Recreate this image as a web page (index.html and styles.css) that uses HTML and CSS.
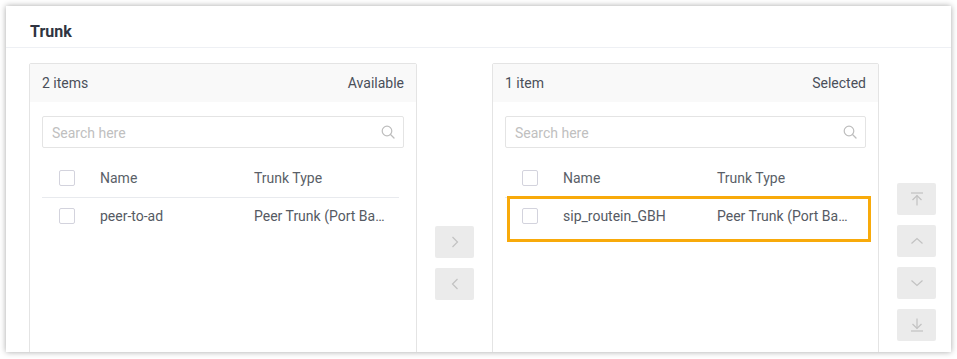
FILE: index.html
```html
<!DOCTYPE html>
<html lang="en">
<head>
    <meta charset="UTF-8">
    <meta name="viewport" content="width=device-width, initial-scale=1.0">
    <title>Trunk</title>
    <link rel="stylesheet" href="styles.css">
</head>
<body>
    <div class="card">
        <div class="card-header">Trunk</div>

        <div class="transfer">
            <div class="panel">
                <div class="panel-head">
                    <span>2 items</span>
                    <span>Available</span>
                </div>
                <div class="panel-body">
                    <div class="search">
                        <span class="placeholder">Search here</span>
                        <svg class="search-icon" width="14" height="14" viewBox="0 0 14 14">
                            <circle cx="6" cy="6" r="4.8" fill="none" stroke="#bdbdbd" stroke-width="1.2"/>
                            <line x1="9.5" y1="9.5" x2="13" y2="13" stroke="#bdbdbd" stroke-width="1.3" stroke-linecap="round"/>
                        </svg>
                    </div>
                    <div class="list">
                        <div class="row row-head">
                            <span class="cell"><span class="checkbox"></span></span>
                            <span class="cell">Name</span>
                            <span class="cell">Trunk Type</span>
                        </div>
                        <div class="row">
                            <span class="cell"><span class="checkbox"></span></span>
                            <span class="cell">peer-to-ad</span>
                            <span class="cell" title="Peer Trunk (Port Based)">Peer Trunk (Port Ba…</span>
                        </div>
                    </div>
                </div>
            </div>

            <div class="ops">
                <button class="op-btn">
                    <svg width="8" height="12" viewBox="0 0 8 12"><polyline points="1.5,1 6.5,6 1.5,11" fill="none" stroke="#c2c2c2" stroke-width="1.2"/></svg>
                </button>
                <button class="op-btn">
                    <svg width="8" height="12" viewBox="0 0 8 12"><polyline points="6.5,1 1.5,6 6.5,11" fill="none" stroke="#c2c2c2" stroke-width="1.2"/></svg>
                </button>
            </div>

            <div class="panel panel-right">
                <div class="panel-head">
                    <span>1 item</span>
                    <span>Selected</span>
                </div>
                <div class="panel-body">
                    <div class="search">
                        <span class="placeholder">Search here</span>
                        <svg class="search-icon" width="14" height="14" viewBox="0 0 14 14">
                            <circle cx="6" cy="6" r="4.8" fill="none" stroke="#bdbdbd" stroke-width="1.2"/>
                            <line x1="9.5" y1="9.5" x2="13" y2="13" stroke="#bdbdbd" stroke-width="1.3" stroke-linecap="round"/>
                        </svg>
                    </div>
                    <div class="list">
                        <div class="row row-head">
                            <span class="cell"><span class="checkbox"></span></span>
                            <span class="cell">Name</span>
                            <span class="cell">Trunk Type</span>
                        </div>
                        <div class="row">
                            <span class="cell"><span class="checkbox"></span></span>
                            <span class="cell">sip_routein_GBH</span>
                            <span class="cell" title="Peer Trunk (Port Based)">Peer Trunk (Port Ba…</span>
                        </div>
                    </div>
                </div>
                <div class="highlight"></div>
            </div>

            <div class="ops ops-sort">
                <button class="op-btn">
                    <svg width="14" height="14" viewBox="0 0 14 14"><line x1="1" y1="1" x2="13" y2="1" stroke="#c2c2c2" stroke-width="1.2"/><line x1="7" y1="3.5" x2="7" y2="13.5" stroke="#c2c2c2" stroke-width="1.2"/><polyline points="2.5,8 7,3.5 11.5,8" fill="none" stroke="#c2c2c2" stroke-width="1.2"/></svg>
                </button>
                <button class="op-btn">
                    <svg width="14" height="8" viewBox="0 0 14 8"><polyline points="1.5,6.5 7,1.5 12.5,6.5" fill="none" stroke="#c2c2c2" stroke-width="1.2"/></svg>
                </button>
                <button class="op-btn">
                    <svg width="14" height="8" viewBox="0 0 14 8"><polyline points="1.5,1.5 7,6.5 12.5,1.5" fill="none" stroke="#c2c2c2" stroke-width="1.2"/></svg>
                </button>
                <button class="op-btn">
                    <svg width="14" height="14" viewBox="0 0 14 14"><line x1="1" y1="13" x2="13" y2="13" stroke="#c2c2c2" stroke-width="1.2"/><line x1="7" y1="0.5" x2="7" y2="10.5" stroke="#c2c2c2" stroke-width="1.2"/><polyline points="2.5,6 7,10.5 11.5,6" fill="none" stroke="#c2c2c2" stroke-width="1.2"/></svg>
                </button>
            </div>
        </div>
    </div>
</body>
</html>
```

FILE: styles.css
```css
body {
    margin: 0;
    padding: 6px;
    background-color: #ffffff;
    font-family: Roboto, "Liberation Sans", Arial, sans-serif;
    font-size: 14px;
    color: #555a63;
}
.card {
    width: 945px;
    height: 346px;
    background-color: #ffffff;
    box-shadow: 0 0 6px rgba(0, 0, 0, 0.35);
    overflow: hidden;
}
.card-header {
    height: 42px;
    box-sizing: border-box;
    padding: 16px 0 0 24px;
    border-bottom: 1px solid #eef0f4;
    font-size: 16px;
    font-weight: bold;
    line-height: 19px;
    color: #2f3441;
}
.transfer {
    display: flex;
    align-items: flex-start;
    gap: 18px;
    padding: 15px 0 0 23px;
}
.panel {
    position: relative;
    width: 388px;
    height: 320px;
    box-sizing: border-box;
    border: 1px solid #e4e4e4;
    border-radius: 2px;
}
.panel-right {
    width: 387px;
}
.panel-head {
    height: 38px;
    padding: 0 12px;
    display: flex;
    justify-content: space-between;
    align-items: center;
    background-color: #f9f9f9;
    color: #4a4f59;
}
.panel-body {
    padding: 14px 12px 0 12px;
}
.search {
    height: 32px;
    box-sizing: border-box;
    border: 1px solid #e4e4e4;
    border-radius: 2px;
    padding: 2px 8px 0 9px;
    display: flex;
    justify-content: space-between;
    align-items: center;
}
.placeholder {
    color: #c0c0c0;
}
.search-icon {
    margin-top: -3px;
}
.list {
    width: 357px;
    margin-top: 11px;
}
.row {
    display: grid;
    grid-template-columns: 46px 154px 157px;
    height: 36px;
    align-items: center;
}
.row-head {
    height: 39px;
    box-sizing: border-box;
    border-bottom: 1px solid #e8eaee;
    color: #5a5f68;
}
.cell {
    padding: 0 12px;
    white-space: nowrap;
}
.cell:first-child {
    padding: 0 0 0 17px;
    display: flex;
}
.checkbox {
    width: 16px;
    height: 16px;
    box-sizing: border-box;
    border: 1px solid #d3d3dd;
    border-radius: 2px;
    background-color: #ffffff;
}
.ops {
    display: flex;
    flex-direction: column;
    gap: 10px;
    padding-top: 163px;
}
.ops-sort {
    padding-top: 120px;
}
.op-btn {
    width: 39px;
    height: 32px;
    padding: 0;
    border: none;
    border-radius: 2px;
    background-color: #ebebeb;
    display: flex;
    justify-content: center;
    align-items: center;
}
.highlight {
    position: absolute;
    left: 14px;
    top: 132px;
    width: 364px;
    height: 46px;
    box-sizing: border-box;
    border: 3px solid #f8aa0a;
}
```
